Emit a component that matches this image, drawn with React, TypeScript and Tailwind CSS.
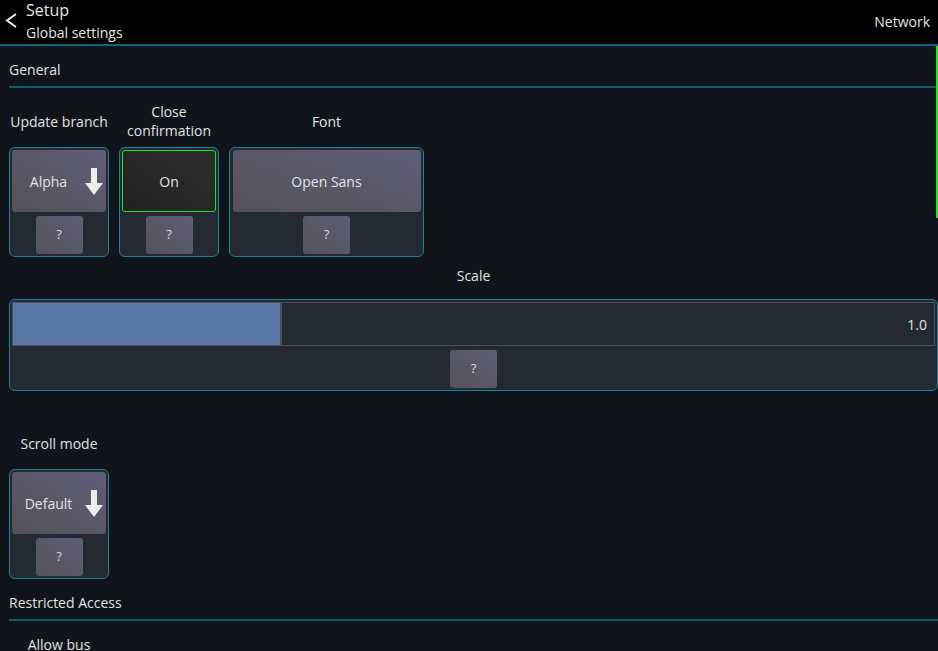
import { ReactNode } from 'react';

// Down arrow shown on dropdown buttons
const DownArrow = () => (
  <svg width="18" height="27" viewBox="0 0 18 27" className="shrink-0">
    <path d="M6 0 H12 V15 H18 L9 27 L0 15 H6 Z" fill="#ececec" />
  </svg>
);

const SectionHeader = ({ title }: { title: string }) => (
  <div className="h-[42px] flex items-end border-b-2 border-[#0d5f6e] pb-[6px] text-[14px] text-[#e2e2e2]">
    {title}
  </div>
);

const HelpButton = () => (
  <button className="w-[47px] h-[38px] rounded-[3px] bg-linear-to-tr from-[#545259] to-[#5f5e78] text-[13px] text-[#dcdcdc] flex items-center justify-center">
    ?
  </button>
);

const Setting = ({ label, width, children }: { label: ReactNode; width: number; children: ReactNode }) => (
  <div className="flex flex-col" style={{ width }}>
    <div className="h-[40px] mb-[6px] flex items-center justify-center text-center leading-[19px] text-[14px] text-[#e2e2e2]">
      {label}
    </div>
    <div className="h-[110px] rounded-[6px] border border-[#1a8293] bg-[#242a34] p-[2px] flex flex-col items-center gap-[4px]">
      {children}
      <HelpButton />
    </div>
  </div>
);

const Dropdown = ({ value }: { value: string }) => (
  <button className="w-full h-[62px] rounded-[3px] bg-linear-to-tr from-[#545259] to-[#5f5e78] flex items-center pr-[3px] text-[14px] text-[#e2e2e2]">
    <span className="flex-1 text-center">{value}</span>
    <DownArrow />
  </button>
);

export default function App() {
  return (
    <div className="relative w-[938px] h-[651px] overflow-hidden bg-[#11141a] font-['Open_Sans',sans-serif]">
      {/* Top bar */}
      <header className="h-[46px] bg-black border-b-2 border-[#0d6677] flex items-start justify-between text-[#e6e6e6]">
        <div className="flex items-start">
          <svg width="26" height="44" viewBox="0 0 26 44" className="shrink-0">
            <polyline points="16,14 7,20.5 16,27" fill="none" stroke="#f0f0f0" strokeWidth="2" />
          </svg>
          <div className="flex flex-col">
            <span className="text-[16px] leading-[20px]">Setup</span>
            <span className="text-[14px] leading-[23px] mt-[1px]">Global settings</span>
          </div>
        </div>
        <span className="mt-[11px] mr-[8px] text-[14px]">Network</span>
      </header>

      <div className="pl-[9px]">
        <SectionHeader title="General" />

        <div className="flex gap-[10px] mt-[13px]">
          <Setting label="Update branch" width={100}>
            <Dropdown value="Alpha" />
          </Setting>
          <Setting label={<span>Close<br />confirmation</span>} width={100}>
            <button className="w-full h-[62px] rounded-[3px] border border-[#22e022] bg-linear-to-tr from-[#222222] to-[#2d2d2d] text-[14px] text-[#e2e2e2]">
              On
            </button>
          </Setting>
          <Setting label="Font" width={195}>
            <button className="w-[188px] h-[62px] rounded-[3px] bg-linear-to-tr from-[#545259] to-[#5f5e78] text-[14px] text-[#e2e2e2]">
              Open Sans
            </button>
          </Setting>
        </div>

        {/* Scale slider */}
        <div className="h-[36px] mb-[6px] flex items-center justify-center text-[14px] text-[#e2e2e2]">
          Scale
        </div>
        <div className="h-[92px] rounded-[6px] border border-[#1a8293] bg-[#242a34] p-[2px] flex flex-col items-center gap-[4px]">
          <div className="w-full h-[45px] border border-[#4d4e52] flex relative">
            <div className="w-[269px] h-full bg-[#5677a6] border-r-2 border-[#4d4e52]" />
            <span className="absolute right-[7px] top-0 h-full flex items-center text-[14px] text-[#e2e2e2]">1.0</span>
          </div>
          <HelpButton />
        </div>

        <div className="flex mt-[32px]">
          <Setting label="Scroll mode" width={100}>
            <Dropdown value="Default" />
          </Setting>
        </div>

        <SectionHeader title="Restricted Access" />

        <div className="flex mt-[3px]">
          <div className="w-[100px] h-[40px] flex items-center justify-center text-[14px] text-[#e2e2e2]">Allow bus</div>
        </div>
      </div>

      {/* scrollbar */}
      <div className="absolute right-0 top-[46px] w-[2px] h-[172px] bg-[#22e022]" />
    </div>
  );
}
